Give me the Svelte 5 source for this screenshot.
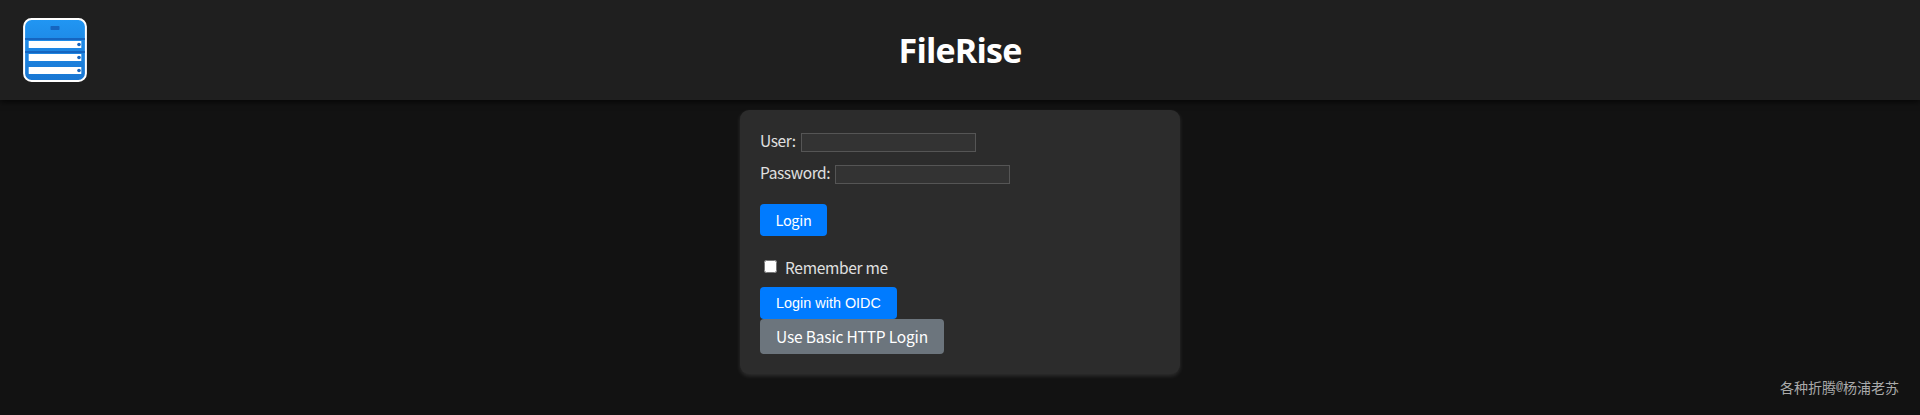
<script>
  let user = $state('');
  let password = $state('');
  let remember = $state(false);
</script>

<div class="page">
  <header>
    <svg class="logo" width="64" height="64" viewBox="0 0 64 64" aria-label="FileRise logo">
      <defs>
        <linearGradient id="cabinet" x1="0" y1="0" x2="0" y2="1">
          <stop offset="0" stop-color="#2196f3" />
          <stop offset="1" stop-color="#1976d2" />
        </linearGradient>
      </defs>
      <rect x="1.1" y="1.1" width="61.8" height="61.8" rx="7.5" fill="url(#cabinet)" stroke="#fff" stroke-width="2" />
      <rect x="27.5" y="8" width="9" height="4" rx="0.7" fill="#1565c0" />
      <rect x="2" y="20" width="60" height="2" fill="#1565c0" />
      <rect x="2" y="33" width="60" height="2" fill="#1565c0" />
      {#each [23, 36, 49] as y}
        <rect x="5.7" {y} width="52.6" height="7" rx="0.5" fill="#fff" />
        <circle cx="56" cy={y + 3.5} r="1.8" fill="#1565c0" />
      {/each}
    </svg>
    <h1>FileRise</h1>
    <div></div>
  </header>

  <main>
    <form onsubmit={(e) => e.preventDefault()}>
      <div class="field">
        <label for="user" class="user">User:</label>
        <input id="user" type="text" bind:value={user} />
      </div>
      <div class="field">
        <label for="password" class="pass">Password:</label>
        <input id="password" type="password" bind:value={password} />
      </div>
      <button class="btn login" type="submit">Login</button>
      <div class="remember">
        <input id="remember" type="checkbox" bind:checked={remember} />
        <label for="remember">Remember me</label>
      </div>
      <button class="btn oidc" type="button">Login with OIDC</button>
      <a class="btn basic" href="#basic">Use Basic HTTP Login</a>
    </form>
  </main>
  <footer>各种折腾<span>@</span>杨浦老苏</footer>
</div>

<style>
  :global(body) { background: #121212; }
  * { box-sizing: border-box; }
  .page {
    height: 415px;
    display: flex;
    flex-direction: column;
    overflow: hidden;
    position: relative;
    color: #e0e0e0;
    font: 15.5px/20px "Noto Sans CJK SC", sans-serif;
  }
  header {
    height: 100px;
    flex: none;
    display: grid;
    grid-template-columns: 1fr auto 1fr;
    align-items: center;
    padding: 0 23px;
    background: #1f1f1f;
    box-shadow: 0 2px 6px rgba(0, 0, 0, 0.7);
  }
  .logo { display: block; }
  h1 {
    margin: 0;
    color: #fff;
    font: 700 34px/44px "Open Sans", sans-serif;
    letter-spacing: -0.8px;
  }
  main { display: flex; justify-content: center; padding-top: 10px; }
  form {
    width: 440px;
    height: 264px;
    padding: 20px;
    display: flex;
    flex-direction: column;
    align-items: flex-start;
    border-radius: 9px;
    background: #2c2c2c;
    box-shadow: 0 2px 4px rgba(255, 255, 255, 0.12);
  }
  .field { height: 32px; display: flex; align-items: flex-start; padding-top: 3px; }
  .field label { line-height: 18px; margin-top: -2px; letter-spacing: -0.4px; }
  .user { width: 41px; }
  .pass { width: 75px; }
  .field input {
    width: 175px;
    height: 19px;
    padding: 1px 2px;
    border: 1px solid #555;
    border-radius: 0;
    outline: none;
    background: #333;
    color: #e0e0e0;
  }
  .btn {
    flex: none;
    display: flex;
    align-items: center;
    justify-content: center;
    padding: 0;
    border: 0;
    border-radius: 4px;
    background: #007bff;
    color: #fff;
    text-decoration: none;
    white-space: nowrap;
  }
  .login { width: 67px; height: 32px; margin-top: 10px; padding-bottom: 2px; font: 14.5px "Noto Sans CJK SC", sans-serif; letter-spacing: -0.3px; }
  .remember { height: 51px; padding-top: 21px; display: flex; align-items: flex-start; }
  .remember input { width: 13px; height: 13px; margin: 3px 8px 0 4px; }
  .remember label { letter-spacing: -0.3px; }
  .oidc { width: 137px; height: 32px; font: 14.4px "Liberation Sans", Arial, sans-serif; }
  .basic { width: 184px; height: 35px; padding-bottom: 2px; background: #6c757d; letter-spacing: -0.18px; }
  footer {
    position: absolute;
    right: 21px;
    bottom: 17px;
    display: flex;
    color: #aaa;
    font: 14px/20px "Noto Sans CJK SC", sans-serif;
  }
  footer span { width: 7px; font: 12px/21px "Liberation Mono", monospace; }
</style>
